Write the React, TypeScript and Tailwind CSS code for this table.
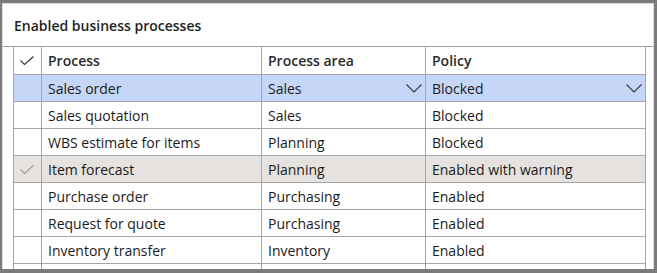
import React from "react";

const rows = [
  { p: "Sales order", a: "Sales", pol: "Blocked", sel: true },
  { p: "Sales quotation", a: "Sales", pol: "Blocked" },
  { p: "WBS estimate for items", a: "Planning", pol: "Blocked" },
  { p: "Item forecast", a: "Planning", pol: "Enabled with warning", hover: true },
  { p: "Purchase order", a: "Purchasing", pol: "Enabled" },
  { p: "Request for quote", a: "Purchasing", pol: "Enabled" },
  { p: "Inventory transfer", a: "Inventory", pol: "Enabled" },
  { p: "", a: "", pol: "" },
];

function Check({ color }: { color: string }) {
  return (
    <svg width="14" height="9" viewBox="0 0 14 9" fill="none">
      <polyline points="0.5,4.5 4.5,8.5 13.5,0.5" stroke={color} strokeWidth="1.1" />
    </svg>
  );
}

function Chevron() {
  return (
    <svg width="16" height="9" viewBox="0 0 16 9" fill="none">
      <polyline points="0.5,0.5 8,8 15.5,0.5" stroke="#3a3a3a" strokeWidth="1.1" />
    </svg>
  );
}

export default function App() {
  return (
    <div className="w-[657px] h-[273px] border-[#7b7b7b] border-t-[3px] border-l-2 border-r-[3px] border-b-4 font-['Open_Sans',sans-serif] text-[#1b1b1b]">
      <div className="h-full border border-b-0 border-[#dedede] bg-white overflow-hidden flex flex-col">
        <div className="h-[43px] shrink-0 border-b border-[#a3a3a3] flex items-center pl-[11px] text-[14px] font-semibold text-[#1f1f1f]">
          Enabled business processes
        </div>
        <div className="ml-[10px] w-[633px] grid grid-cols-[27px_219px_163px_219px] gap-px bg-[#a6a6a6] border-x border-[#a6a6a6] text-[14px]">
          <div className="h-[27px] bg-white flex items-center justify-center pr-px">
            <Check color="#333" />
          </div>
          <div className="h-[27px] bg-white flex items-center pl-[6px] font-semibold text-[#2b2b2b]">Process</div>
          <div className="h-[27px] bg-white flex items-center pl-[6px] font-semibold text-[#2b2b2b]">Process area</div>
          <div className="h-[27px] bg-white flex items-center pl-[6px] font-semibold text-[#2b2b2b]">Policy</div>
          {rows.map((r, i) => {
            const bg = r.sel ? "bg-[#c6d6f6]" : r.hover ? "bg-[#e5e2df]" : "bg-white";
            return (
              <React.Fragment key={i}>
                <div className={`h-[26px] ${bg} flex items-center justify-center pr-px`}>
                  {r.hover && <Check color="#9a9a9a" />}
                </div>
                <div className={`h-[26px] ${bg} flex items-center pl-[6px]`}>{r.p}</div>
                <div className={`h-[26px] ${bg} flex items-center justify-between pl-[6px] pr-[3px]`}>
                  <span>{r.a}</span>
                  {r.sel && <Chevron />}
                </div>
                <div className={`h-[26px] ${bg} flex items-center justify-between pl-[6px] pr-[3px]`}>
                  <span>{r.pol}</span>
                  {r.sel && <Chevron />}
                </div>
              </React.Fragment>
            );
          })}
        </div>
      </div>
    </div>
  );
}
